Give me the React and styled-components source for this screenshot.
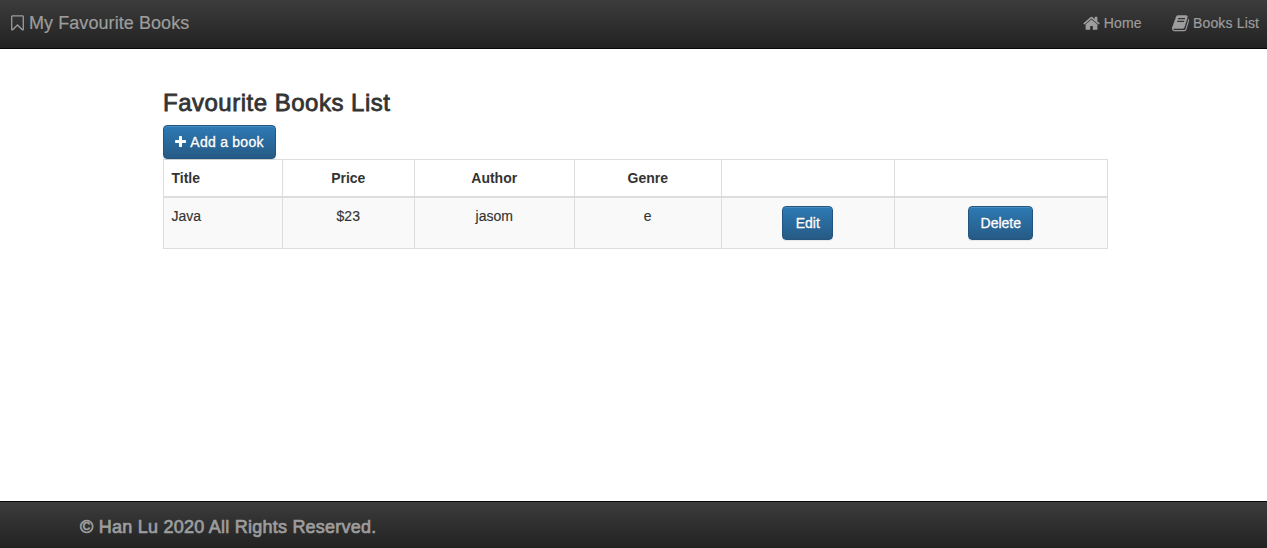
import React from 'react';
import styled, { createGlobalStyle } from 'styled-components';

const Global = createGlobalStyle`
  *, *::before, *::after { box-sizing: border-box; }
  body { margin: 0; background: #fff; color: #333; font: 14px/20px "Liberation Sans", Arial, sans-serif; overflow: hidden; }
`;

const Page = styled.div`display: flex; flex-direction: column; height: 548px;`;

const Bar = styled.header`
  display: flex; align-items: center; justify-content: space-between;
  height: 49px; flex: none; padding: 0 8px 3px 11px;
  background: linear-gradient(#3c3c3c, #222); border-bottom: 1px solid #080808; color: #9d9d9d;
  -webkit-text-stroke: .2px currentColor;
`;
const Brand = styled.a`display: flex; align-items: center; gap: 5px; font-size: 18px; white-space: nowrap;`;
const Nav = styled.nav`display: flex; gap: 30px;`;
const NavLink = styled.a`display: flex; align-items: center; gap: 4px; white-space: nowrap;`;
const Glyph = styled.svg`display: block; flex: none; fill: currentColor; margin-top: ${p => p.$drop || 0}px;`;
const Label = styled.span`display: block; width: ${p => p.$w}px; letter-spacing: ${p => p.$track || 0}px; white-space: nowrap;`;

const Main = styled.main`flex: 1; width: 945px; margin-left: 163px; padding-top: 40px;`;
const Heading = styled.h1`
  margin: 0 0 9px; font-size: 24px; line-height: 27px; font-weight: 400;
  letter-spacing: .5px; -webkit-text-stroke: .8px currentColor;
`;
const Button = styled.button`
  display: inline-flex; align-items: center; justify-content: center; gap: 4px;
  height: 34px; width: ${p => p.$w}px; padding: 0; border: 1px solid #245580; border-radius: 4px;
  background: linear-gradient(#2d7ab5, #265a85); color: #fff; font: inherit; white-space: nowrap;
  text-shadow: 0 -1px 0 rgba(0, 0, 0, .2); -webkit-text-stroke: .3px currentColor;
  box-shadow: inset 0 1px 0 rgba(255, 255, 255, .15), 0 1px 1px rgba(0, 0, 0, .075);
  vertical-align: top;
`;
const Table = styled.table`
  width: 945px; table-layout: fixed; border-collapse: separate; border-spacing: 0; text-align: center;
  border: solid #ddd; border-width: 1px 0 0 1px;
`;
const Th = styled.th`
  height: 38px; padding: 8px 8px 8px 7.5px; border: solid #ddd; border-width: 0 1px 2px 0;
  text-align: ${p => p.$left ? 'left' : 'center'};
`;
const Td = styled.td`
  height: 51px; padding: 8px 8px 8px 7.5px; border: solid #ddd; border-width: 0 1px 1px 0;
  background: #f9f9f9; vertical-align: top; text-align: ${p => p.$left ? 'left' : 'center'};
  -webkit-text-stroke: .15px currentColor;
`;

const Footer = styled.footer`
  height: 47px; flex: none; padding: 15px 80px 0; font-size: 18px;
  letter-spacing: .24px; -webkit-text-stroke: .7px currentColor;
  border-top: 1px solid #080808; background: linear-gradient(#3c3c3c, #222); color: #9d9d9d;
`;

const BookmarkIcon = () => (
  <Glyph width="13" height="18" viewBox="256 0 1280 1792">
    <path d="M1408 256h-1024v1242l423-406 89-85 89 85 423 406v-1242zm12-128q23 0 44 9 33 13 52.500 41t19.500 62v1289q0 34-19.500 62t-52.500 41q-19 8-44 8-48 0-83-32l-441-424-441 424q-36 33-83 33-23 0-44-9-33-13-52.500-41t-19.500-62v-1289q0-34 19.500-62t52.500-41q21-9 44-9h1048z" />
  </Glyph>
);
const HomeIcon = () => (
  <Glyph $drop={2} width="17" height="18.67" viewBox="64 0 1664 1792">
    <path d="M1472 992v480q0 26-19 45t-45 19h-384v-384h-256v384h-384q-26 0-45-19t-19-45v-480q0-1 .5-3t.5-3l575-474 575 474q1 2 1 6zm223-69l-62 74q-8 9-21 11h-3q-13 0-21-7l-692-577-692 577q-12 8-24 7-13-2-21-11l-62-74q-8-10-7-23.500t11-21.500l719-599q32-26 76-26t76 26l244 204v-195q0-14 9-23t23-9h192q14 0 23 9t9 23v408l219 182q10 8 11 21.500t-7 23.500z" />
  </Glyph>
);
const BookIcon = () => (
  <Glyph $drop={2} width="17.3" height="18.67" viewBox="64 0 1664 1792">
    <path d="M1703 478q40 57 18 129l-275 906q-19 64-76.500 107.500t-122.500 43.500h-923q-77 0-148.500-53.500t-99.500-131.500q-24-67-2-127 0-4 3-27t4-37q1-8-3-21.500t-3-19.500q2-11 8-21t16.500-23.500 16.500-23.500q23-38 45-91.500t30-91.500q3-10 .5-30t-.5-28q3-11 17-28t17-23q21-36 42-92t25-90q1-9-2.500-32t.5-28q4-13 22-30.500t22-22.500q19-26 42.500-84.500t27.500-96.500q1-8-3-25.500t-2-26.500q2-8 9-18t18-23 17-21q8-12 16.500-30.500t15-35 16-36 19.500-32 26.500-23.500 36-11.500 47.500 5.500l-1 3q38-9 51-9h761q74 0 114 56t18 130l-274 906q-36 119-71.500 153.500t-128.500 34.500h-869q-27 0-38 15-11 16-1 43 24 70 144 70h923q29 0 56-15.500t35-41.500l300-987q7-22 5-57 38 15 59 43zm-1064 2q-4 13 2 22.500t20 9.500h608q13 0 25.500-9.500t16.500-22.500l21-64q4-13-2-22.500t-20-9.500h-608q-13 0-25.500 9.500t-16.500 22.500zm-83 256q-4 13 2 22.500t20 9.500h608q13 0 25.500-9.500t16.500-22.500l21-64q4-13-2-22.500t-20-9.500h-608q-13 0-25.500 9.500t-16.500 22.500z" />
  </Glyph>
);
const PlusIcon = () => (
  <Glyph width="11" height="14" viewBox="192 0 1408 1792">
    <path d="M1600 736v192q0 40-28 68t-68 28h-416v416q0 40-28 68t-68 28h-192q-40 0-68-28t-28-68v-416h-416q-40 0-68-28t-28-68v-192q0-40 28-68t68-28h416v-416q0-40 28-68t68-28h192q40 0 68 28t28 68v416h416q40 0 68 28t28 68z" />
  </Glyph>
);

export default function App() {
  return (
    <Page>
      <Global />
      <Bar>
        <Brand><BookmarkIcon /><Label $w={161} $track={0.07}>My Favourite Books</Label></Brand>
        <Nav>
          <NavLink><HomeIcon /><Label $w={38} $track={0.2}>Home</Label></NavLink>
          <NavLink><BookIcon /><Label $w={66} $track={0.15}>Books List</Label></NavLink>
        </Nav>
      </Bar>
      <Main>
        <Heading>Favourite Books List</Heading>
        <Button $w={113}><PlusIcon /><Label $w={74} $track={0.25}>Add a book</Label></Button>
        <Table>
          <colgroup>{[119, 132, 160, 147, 173, 213].map((w, i) => <col key={i} width={w} />)}</colgroup>
          <thead><tr><Th $left>Title</Th><Th>Price</Th><Th>Author</Th><Th>Genre</Th><Th /><Th /></tr></thead>
          <tbody>
            <tr>
              <Td $left>Java</Td><Td>$23</Td><Td>jasom</Td><Td>e</Td>
              <Td><Button $w={51}>Edit</Button></Td><Td><Button $w={65}>Delete</Button></Td>
            </tr>
          </tbody>
        </Table>
      </Main>
      <Footer>© Han Lu 2020 All Rights Reserved.</Footer>
    </Page>
  );
}
